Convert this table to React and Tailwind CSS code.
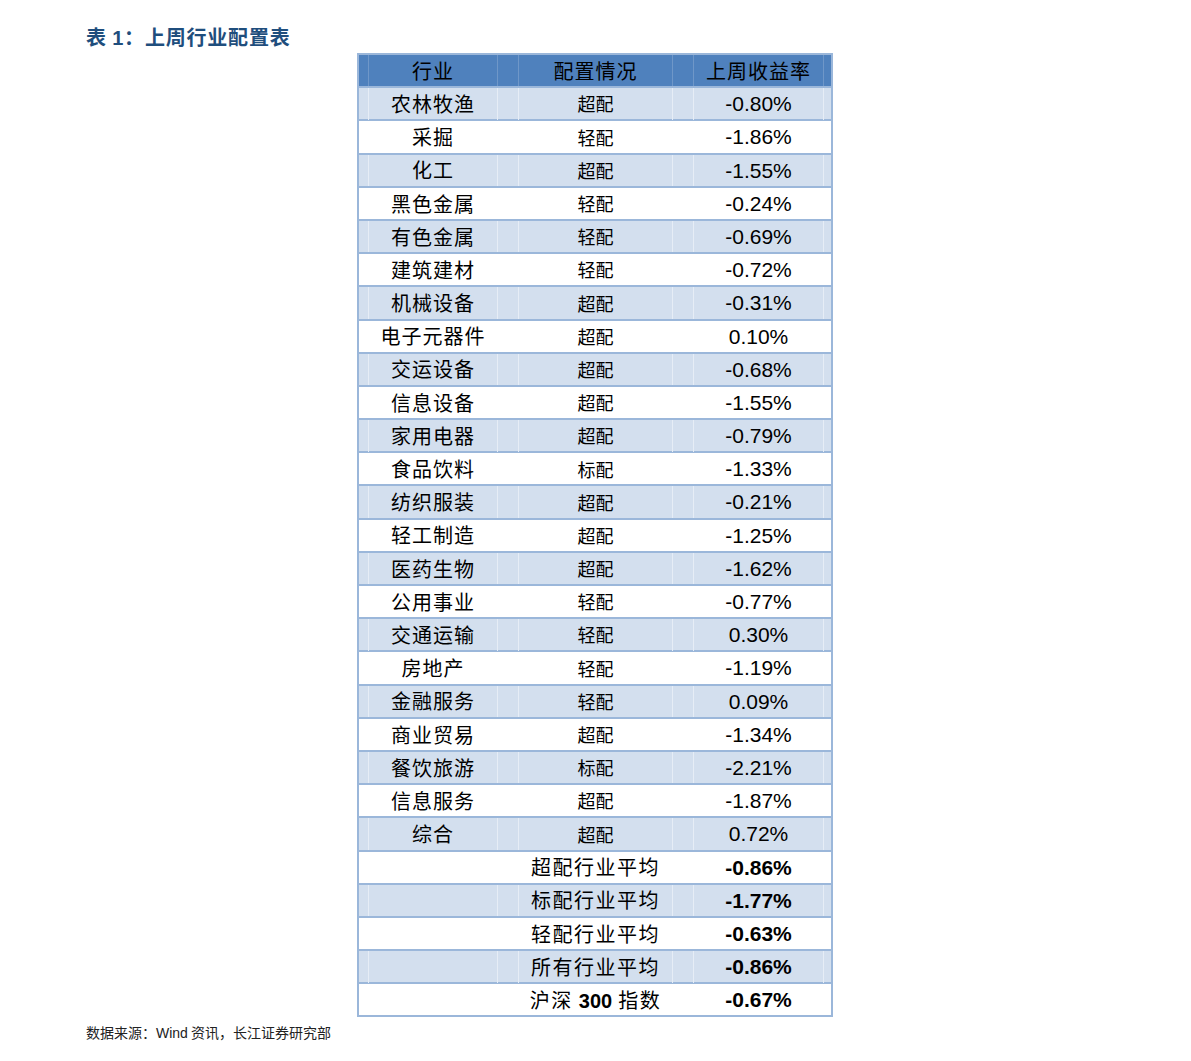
const rows = [
  ['农林牧渔', '超配', '-0.80%'],
  ['采掘', '轻配', '-1.86%'],
  ['化工', '超配', '-1.55%'],
  ['黑色金属', '轻配', '-0.24%'],
  ['有色金属', '轻配', '-0.69%'],
  ['建筑建材', '轻配', '-0.72%'],
  ['机械设备', '超配', '-0.31%'],
  ['电子元器件', '超配', '0.10%'],
  ['交运设备', '超配', '-0.68%'],
  ['信息设备', '超配', '-1.55%'],
  ['家用电器', '超配', '-0.79%'],
  ['食品饮料', '标配', '-1.33%'],
  ['纺织服装', '超配', '-0.21%'],
  ['轻工制造', '超配', '-1.25%'],
  ['医药生物', '超配', '-1.62%'],
  ['公用事业', '轻配', '-0.77%'],
  ['交通运输', '轻配', '0.30%'],
  ['房地产', '轻配', '-1.19%'],
  ['金融服务', '轻配', '0.09%'],
  ['商业贸易', '超配', '-1.34%'],
  ['餐饮旅游', '标配', '-2.21%'],
  ['信息服务', '超配', '-1.87%'],
  ['综合', '超配', '0.72%'],
]

const avgs = [
  ['超配行业平均', '-0.86%'],
  ['标配行业平均', '-1.77%'],
  ['轻配行业平均', '-0.63%'],
  ['所有行业平均', '-0.86%'],
  [null, '-0.67%'],
]

const cjk = "font-['Noto_Sans_CJK_SC',sans-serif]"
const num = "font-['Liberation_Sans',Arial,sans-serif]"

function Row({ shaded, header, a, b, c, bold }) {
  const bg = header ? 'bg-[#4f81bd]' : shaded ? 'bg-[#d3dfee]' : 'bg-white'
  const line = header ? 'border-[#6f97c8]' : shaded ? 'border-[#e6edf6]' : 'border-transparent'
  return (
    <div className={`grid grid-cols-[9px_129px_21px_154px_21px_130px_8px] h-[33.2px] border-b-2 border-b-[#9bb7da] ${bg}`}>
      <div />
      <div className={`border-l ${line} ${cjk} flex items-center justify-center text-[20px] tracking-[1px] text-black whitespace-nowrap`}>{a}</div>
      <div className={`border-l ${line}`} />
      <div className={`border-l ${line} ${cjk} flex items-center justify-center text-black whitespace-nowrap ${header ? 'text-[20px] tracking-[1px]' : bold ? 'text-[20px] tracking-[1.5px]' : 'text-[18px] text-[#1a1a1a]'}`}>{b}</div>
      <div className={`border-l ${line}`} />
      <div className={`border-l ${line} ${header ? cjk : num} flex items-center justify-center text-black whitespace-nowrap ${header ? 'text-[20px] tracking-[1px]' : 'text-[21px]'} ${bold ? 'font-bold' : ''}`}>{c}</div>
      <div className={`border-l ${line}`} />
    </div>
  )
}

export default function App() {
  return (
    <div className="w-[1191px] min-h-[1061px] bg-white pl-[86px] pt-[24px]">
      <h1 className={`${cjk} text-[20px] leading-[26px] tracking-[0.8px] font-bold text-[#1f4e7d]`}>
        表 <span className={num}>1</span>：上周行业配置表
      </h1>
      <div className="ml-[271px] mt-[2px] w-[476px] border-2 border-b-0 border-[#9bb7da]">
        <Row header a="行业" b="配置情况" c="上周收益率" />
        {rows.map(([a, b, c], i) => (
          <Row key={a} shaded={i % 2 === 0} a={a} b={b} c={c} />
        ))}
        {avgs.map(([b, c], i) => (
          <Row
            key={i}
            shaded={i % 2 === 1}
            bold
            a=""
            b={b ?? <span>沪深 <span className={`${num} font-bold tracking-normal`}>300</span> 指数</span>}
            c={c}
          />
        ))}
      </div>
      <p className={`${cjk} mt-[6px] text-[14px] leading-[18px] text-[#222]`}>
        数据来源：<span className={num}>Wind</span> 资讯，长江证券研究部
      </p>
    </div>
  )
}
